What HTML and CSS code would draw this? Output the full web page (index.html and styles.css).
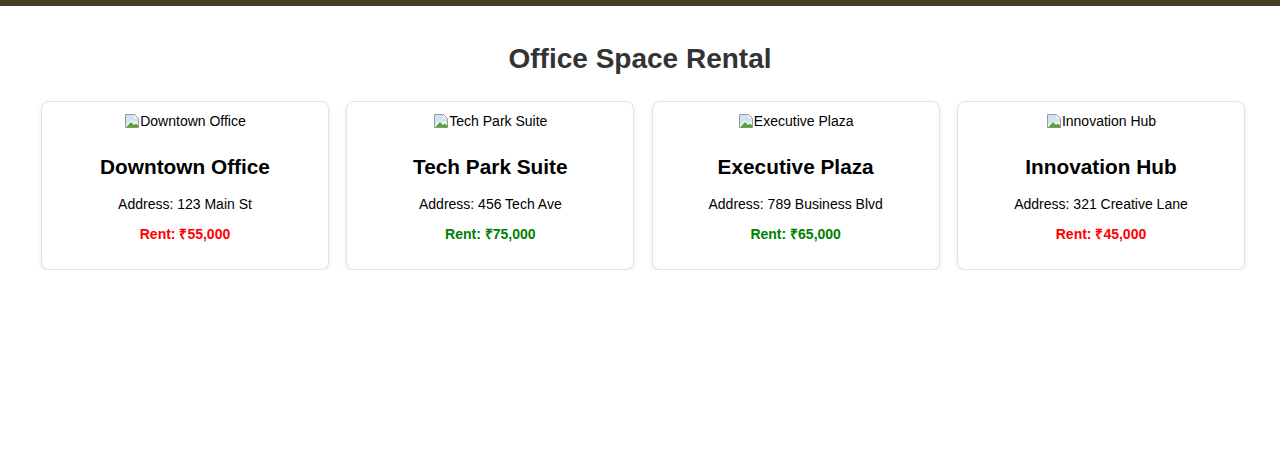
FILE: index.html
```html
<!DOCTYPE html>
<html lang="en">
<head>
<meta charset="utf-8">
<title>Office Space Rental</title>
<link rel="stylesheet" href="styles.css">
</head>
<body>
<div class="topbar"></div>
<h1 class="page-title">Office Space Rental</h1>
<div class="grid">
  <div class="card">
    <div class="img-alt"><svg class="broken" width="16" height="16" viewBox="0 0 16 16"><path d="M1.5 1.5h9l4 4v9h-13z" fill="#f4f4f4" stroke="#9a9a9a"/><path d="M2 14.5 L7 9 L10 12 L12 10.5 L14.5 13 V14.5Z" fill="#5aa040"/><path d="M2 2h8v3.5h4v4L12 8 10 10 7 7.5 2 12z" fill="#cfe3f2"/></svg>Downtown Office</div>
    <h2>Downtown Office</h2>
    <p>Address: 123 Main St</p>
    <p class="rent red">Rent: ₹55,000</p>
  </div>
  <div class="card">
    <div class="img-alt"><svg class="broken" width="16" height="16" viewBox="0 0 16 16"><path d="M1.5 1.5h9l4 4v9h-13z" fill="#f4f4f4" stroke="#9a9a9a"/><path d="M2 14.5 L7 9 L10 12 L12 10.5 L14.5 13 V14.5Z" fill="#5aa040"/><path d="M2 2h8v3.5h4v4L12 8 10 10 7 7.5 2 12z" fill="#cfe3f2"/></svg>Tech Park Suite</div>
    <h2>Tech Park Suite</h2>
    <p>Address: 456 Tech Ave</p>
    <p class="rent green">Rent: ₹75,000</p>
  </div>
  <div class="card">
    <div class="img-alt"><svg class="broken" width="16" height="16" viewBox="0 0 16 16"><path d="M1.5 1.5h9l4 4v9h-13z" fill="#f4f4f4" stroke="#9a9a9a"/><path d="M2 14.5 L7 9 L10 12 L12 10.5 L14.5 13 V14.5Z" fill="#5aa040"/><path d="M2 2h8v3.5h4v4L12 8 10 10 7 7.5 2 12z" fill="#cfe3f2"/></svg>Executive Plaza</div>
    <h2>Executive Plaza</h2>
    <p>Address: 789 Business Blvd</p>
    <p class="rent green">Rent: ₹65,000</p>
  </div>
  <div class="card">
    <div class="img-alt"><svg class="broken" width="16" height="16" viewBox="0 0 16 16"><path d="M1.5 1.5h9l4 4v9h-13z" fill="#f4f4f4" stroke="#9a9a9a"/><path d="M2 14.5 L7 9 L10 12 L12 10.5 L14.5 13 V14.5Z" fill="#5aa040"/><path d="M2 2h8v3.5h4v4L12 8 10 10 7 7.5 2 12z" fill="#cfe3f2"/></svg>Innovation Hub</div>
    <h2>Innovation Hub</h2>
    <p>Address: 321 Creative Lane</p>
    <p class="rent red">Rent: ₹45,000</p>
  </div>
</div>
</body>
</html>
```
FILE: styles.css
```css
html, body {
  margin: 0;
  padding: 0;
  background: #fff;
  font-family: "Liberation Sans", Arial, sans-serif;
  color: #000;
}
.topbar {
  height: 6px;
  background: #423c20;
}
.page-title {
  margin: 37px 0 26px;
  font-size: 28px;
  line-height: 32px;
  font-weight: bold;
  color: #333;
  text-align: center;
}
.grid {
  display: grid;
  grid-template-columns: repeat(4, 288px);
  column-gap: 17.33px;
  padding-left: 41px;
}
.card {
  border: 1px solid #e2e2e2;
  border-radius: 8px;
  box-shadow: 0 2px 5px rgba(0,0,0,0.09);
  background: #fff;
  padding: 8px 15px 13px;
  text-align: center;
}
.img-alt {
  display: flex;
  justify-content: center;
  align-items: center;
  height: 22px;
  font-size: 14px;
  line-height: 16px;
}
.broken {
  display: block;
}
.card h2 {
  margin: 23px 0 0;
  font-size: 20.8px;
  line-height: 24px;
  font-weight: bold;
}
.card p {
  margin: 17px 0 0;
  font-size: 14px;
  line-height: 16px;
}
.card p.rent {
  margin-top: 14px;
  font-weight: bold;
}
.card p.rent:last-child { margin-bottom: 14px; }
.red { color: #ff0000; }
.green { color: #008000; }
```
